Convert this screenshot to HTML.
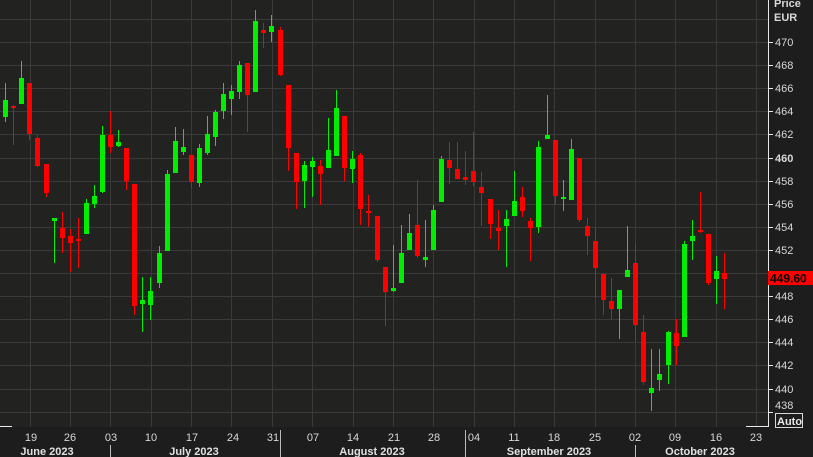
<!DOCTYPE html>
<html><head><meta charset="utf-8"><style>
html,body{margin:0;padding:0;background:#1c1c1c;width:813px;height:457px;overflow:hidden}
svg{display:block}
text{font-family:"Liberation Sans",sans-serif}
</style></head><body>
<svg width="813" height="457" viewBox="0 0 813 457" xmlns="http://www.w3.org/2000/svg">
<rect x="0" y="0" width="813" height="457" fill="#1d1d1d"/>
<rect x="0" y="0" width="768" height="427" fill="#222321"/>
<g stroke="#3a3a3a" stroke-width="1">
<line x1="0" x2="768" y1="19.5" y2="19.5"/><line x1="0" x2="768" y1="42.5" y2="42.5"/><line x1="0" x2="768" y1="65.5" y2="65.5"/><line x1="0" x2="768" y1="88.5" y2="88.5"/><line x1="0" x2="768" y1="111.5" y2="111.5"/><line x1="0" x2="768" y1="134.5" y2="134.5"/><line x1="0" x2="768" y1="158.5" y2="158.5"/><line x1="0" x2="768" y1="181.5" y2="181.5"/><line x1="0" x2="768" y1="204.5" y2="204.5"/><line x1="0" x2="768" y1="227.5" y2="227.5"/><line x1="0" x2="768" y1="250.5" y2="250.5"/><line x1="0" x2="768" y1="273.5" y2="273.5"/><line x1="0" x2="768" y1="296.5" y2="296.5"/><line x1="0" x2="768" y1="319.5" y2="319.5"/><line x1="0" x2="768" y1="342.5" y2="342.5"/><line x1="0" x2="768" y1="365.5" y2="365.5"/><line x1="0" x2="768" y1="389.5" y2="389.5"/><line x1="0" x2="768" y1="412.5" y2="412.5"/>
<line y1="0" y2="427" x1="30.5" x2="30.5"/><line y1="0" y2="427" x1="70.5" x2="70.5"/><line y1="0" y2="427" x1="110.5" x2="110.5"/><line y1="0" y2="427" x1="151.5" x2="151.5"/><line y1="0" y2="427" x1="191.5" x2="191.5"/><line y1="0" y2="427" x1="231.5" x2="231.5"/><line y1="0" y2="427" x1="272.5" x2="272.5"/><line y1="0" y2="427" x1="312.5" x2="312.5"/><line y1="0" y2="427" x1="353.5" x2="353.5"/><line y1="0" y2="427" x1="393.5" x2="393.5"/><line y1="0" y2="427" x1="433.5" x2="433.5"/><line y1="0" y2="427" x1="474.5" x2="474.5"/><line y1="0" y2="427" x1="514.5" x2="514.5"/><line y1="0" y2="427" x1="554.5" x2="554.5"/><line y1="0" y2="427" x1="595.5" x2="595.5"/><line y1="0" y2="427" x1="635.5" x2="635.5"/><line y1="0" y2="427" x1="675.5" x2="675.5"/><line y1="0" y2="427" x1="716.5" x2="716.5"/><line y1="0" y2="427" x1="756.5" x2="756.5"/>
</g>
<g fill="#00ee00">
<rect x="5" y="83" width="1" height="39"/><rect x="3" y="100" width="5" height="17"/>
<rect x="21" y="61" width="1" height="43"/><rect x="19" y="78" width="5" height="26"/>
<rect x="54" y="218" width="1" height="45"/><rect x="52" y="218" width="5" height="3"/>
<rect x="86" y="199" width="1" height="35"/><rect x="84" y="203" width="5" height="31"/>
<rect x="94" y="185" width="1" height="23"/><rect x="92" y="196" width="5" height="8"/>
<rect x="102" y="126" width="1" height="67"/><rect x="100" y="135" width="5" height="57"/>
<rect x="118" y="130" width="1" height="17"/><rect x="116" y="142" width="5" height="4"/>
<rect x="142" y="277" width="1" height="55"/><rect x="140" y="300" width="5" height="4"/>
<rect x="150" y="277" width="1" height="43"/><rect x="148" y="291" width="5" height="14"/>
<rect x="159" y="246" width="1" height="42"/><rect x="157" y="253" width="5" height="30"/>
<rect x="167" y="170" width="1" height="81"/><rect x="165" y="174" width="5" height="77"/>
<rect x="175" y="127" width="1" height="46"/><rect x="173" y="141" width="5" height="32"/>
<rect x="183" y="129" width="1" height="26"/><rect x="181" y="147" width="5" height="5"/>
<rect x="199" y="144" width="1" height="43"/><rect x="197" y="148" width="5" height="35"/>
<rect x="207" y="116" width="1" height="39"/><rect x="205" y="134" width="5" height="19"/>
<rect x="215" y="110" width="1" height="36"/><rect x="213" y="112" width="5" height="25"/>
<rect x="223" y="83" width="1" height="36"/><rect x="221" y="94" width="5" height="17"/>
<rect x="231" y="85" width="1" height="30"/><rect x="229" y="91" width="5" height="8"/>
<rect x="239" y="61" width="1" height="38"/><rect x="237" y="65" width="5" height="27"/>
<rect x="255" y="10" width="1" height="82"/><rect x="253" y="21" width="5" height="71"/>
<rect x="271" y="15" width="1" height="27"/><rect x="269" y="26" width="5" height="6"/>
<rect x="304" y="161" width="1" height="47"/><rect x="302" y="165" width="5" height="16"/>
<rect x="312" y="157" width="1" height="40"/><rect x="310" y="161" width="5" height="6"/>
<rect x="328" y="118" width="1" height="50"/><rect x="326" y="150" width="5" height="18"/>
<rect x="336" y="90" width="1" height="66"/><rect x="334" y="108" width="5" height="48"/>
<rect x="352" y="151" width="1" height="32"/><rect x="350" y="159" width="5" height="10"/>
<rect x="393" y="245" width="1" height="47"/><rect x="391" y="288" width="5" height="3"/>
<rect x="401" y="225" width="1" height="58"/><rect x="399" y="253" width="5" height="30"/>
<rect x="409" y="214" width="1" height="36"/><rect x="407" y="233" width="5" height="17"/>
<rect x="425" y="220" width="1" height="47"/><rect x="423" y="257" width="5" height="3"/>
<rect x="433" y="205" width="1" height="45"/><rect x="431" y="210" width="5" height="40"/>
<rect x="441" y="156" width="1" height="46"/><rect x="439" y="159" width="5" height="43"/>
<rect x="506" y="210" width="1" height="57"/><rect x="504" y="219" width="5" height="7"/>
<rect x="514" y="171" width="1" height="45"/><rect x="512" y="201" width="5" height="15"/>
<rect x="538" y="141" width="1" height="92"/><rect x="536" y="147" width="5" height="80"/>
<rect x="547" y="95" width="1" height="44"/><rect x="545" y="135" width="5" height="4"/>
<rect x="563" y="180" width="1" height="31"/><rect x="561" y="197" width="5" height="2"/>
<rect x="571" y="139" width="1" height="61"/><rect x="569" y="149" width="5" height="51"/>
<rect x="619" y="290" width="1" height="49"/><rect x="617" y="290" width="5" height="19"/>
<rect x="627" y="226" width="1" height="51"/><rect x="625" y="270" width="5" height="7"/>
<rect x="651" y="349" width="1" height="62"/><rect x="649" y="388" width="5" height="5"/>
<rect x="659" y="349" width="1" height="42"/><rect x="657" y="374" width="5" height="6"/>
<rect x="668" y="331" width="1" height="53"/><rect x="666" y="332" width="5" height="33"/>
<rect x="684" y="241" width="1" height="96"/><rect x="682" y="244" width="5" height="93"/>
<rect x="692" y="220" width="1" height="40"/><rect x="690" y="236" width="5" height="5"/>
<rect x="716" y="256" width="1" height="48"/><rect x="714" y="271" width="5" height="8"/>
</g>
<g fill="#ff0000">
<rect x="13" y="105" width="1" height="40"/><rect x="11" y="106" width="5" height="2"/>
<rect x="29" y="83" width="1" height="57"/><rect x="27" y="83" width="5" height="51"/>
<rect x="37" y="135" width="1" height="32"/><rect x="35" y="138" width="5" height="28"/>
<rect x="46" y="164" width="1" height="33"/><rect x="44" y="164" width="5" height="29"/>
<rect x="62" y="212" width="1" height="41"/><rect x="60" y="228" width="5" height="10"/>
<rect x="70" y="229" width="1" height="43"/><rect x="68" y="236" width="5" height="7"/>
<rect x="78" y="218" width="1" height="50"/><rect x="76" y="239" width="5" height="2"/>
<rect x="110" y="111" width="1" height="42"/><rect x="108" y="135" width="5" height="12"/>
<rect x="126" y="148" width="1" height="42"/><rect x="124" y="148" width="5" height="33"/>
<rect x="134" y="184" width="1" height="131"/><rect x="132" y="184" width="5" height="122"/>
<rect x="191" y="155" width="1" height="33"/><rect x="189" y="155" width="5" height="27"/>
<rect x="247" y="63" width="1" height="69"/><rect x="245" y="63" width="5" height="32"/>
<rect x="263" y="23" width="1" height="25"/><rect x="261" y="30" width="5" height="3"/>
<rect x="280" y="27" width="1" height="49"/><rect x="278" y="30" width="5" height="45"/>
<rect x="288" y="85" width="1" height="86"/><rect x="286" y="85" width="5" height="63"/>
<rect x="296" y="153" width="1" height="56"/><rect x="294" y="153" width="5" height="29"/>
<rect x="320" y="160" width="1" height="45"/><rect x="318" y="166" width="5" height="8"/>
<rect x="344" y="116" width="1" height="65"/><rect x="342" y="116" width="5" height="52"/>
<rect x="360" y="153" width="1" height="72"/><rect x="358" y="155" width="5" height="54"/>
<rect x="368" y="195" width="1" height="32"/><rect x="366" y="211" width="5" height="2"/>
<rect x="377" y="216" width="1" height="46"/><rect x="375" y="216" width="5" height="44"/>
<rect x="385" y="267" width="1" height="59"/><rect x="383" y="267" width="5" height="25"/>
<rect x="417" y="180" width="1" height="78"/><rect x="415" y="225" width="5" height="31"/>
<rect x="449" y="142" width="1" height="42"/><rect x="447" y="160" width="5" height="8"/>
<rect x="457" y="142" width="1" height="37"/><rect x="455" y="169" width="5" height="10"/>
<rect x="465" y="151" width="1" height="34"/><rect x="463" y="177" width="5" height="3"/>
<rect x="473" y="132" width="1" height="54"/><rect x="471" y="171" width="5" height="11"/>
<rect x="481" y="172" width="1" height="54"/><rect x="479" y="187" width="5" height="6"/>
<rect x="490" y="199" width="1" height="40"/><rect x="488" y="199" width="5" height="25"/>
<rect x="498" y="210" width="1" height="40"/><rect x="496" y="228" width="5" height="3"/>
<rect x="522" y="187" width="1" height="30"/><rect x="520" y="197" width="5" height="14"/>
<rect x="530" y="218" width="1" height="43"/><rect x="528" y="221" width="5" height="7"/>
<rect x="555" y="140" width="1" height="65"/><rect x="553" y="140" width="5" height="56"/>
<rect x="579" y="158" width="1" height="64"/><rect x="577" y="158" width="5" height="62"/>
<rect x="587" y="218" width="1" height="37"/><rect x="585" y="226" width="5" height="10"/>
<rect x="595" y="228" width="1" height="70"/><rect x="593" y="241" width="5" height="27"/>
<rect x="603" y="274" width="1" height="41"/><rect x="601" y="274" width="5" height="26"/>
<rect x="611" y="278" width="1" height="41"/><rect x="609" y="301" width="5" height="8"/>
<rect x="635" y="243" width="1" height="99"/><rect x="633" y="263" width="5" height="62"/>
<rect x="643" y="315" width="1" height="70"/><rect x="641" y="332" width="5" height="50"/>
<rect x="676" y="319" width="1" height="46"/><rect x="674" y="333" width="5" height="13"/>
<rect x="700" y="192" width="1" height="41"/><rect x="698" y="230" width="5" height="2"/>
<rect x="708" y="234" width="1" height="51"/><rect x="706" y="234" width="5" height="49"/>
<rect x="724" y="253" width="1" height="56"/><rect x="722" y="273" width="5" height="6"/>
</g>
<!-- price axis -->
<rect x="768" y="0" width="1" height="427" fill="#e8e8e8"/>
<g fill="#e8e8e8">
<rect x="769" y="42" width="4" height="1"/><rect x="769" y="65" width="4" height="1"/><rect x="769" y="88" width="4" height="1"/><rect x="769" y="111" width="4" height="1"/><rect x="769" y="134" width="4" height="1"/><rect x="769" y="158" width="4" height="1"/><rect x="769" y="181" width="4" height="1"/><rect x="769" y="204" width="4" height="1"/><rect x="769" y="227" width="4" height="1"/><rect x="769" y="250" width="4" height="1"/><rect x="769" y="273" width="4" height="1"/><rect x="769" y="296" width="4" height="1"/><rect x="769" y="319" width="4" height="1"/><rect x="769" y="342" width="4" height="1"/><rect x="769" y="365" width="4" height="1"/><rect x="769" y="389" width="4" height="1"/><rect x="769" y="412" width="4" height="1"/>
<rect x="0" y="426" width="12" height="1"/><rect x="746" y="426" width="22" height="1"/>
</g>
<g fill="#d8d8d8" font-size="11">
<text x="774" y="7" font-weight="bold">Price</text>
<text x="774" y="21" font-weight="bold">EUR</text>
<text x="775" y="46">470</text><text x="775" y="69">468</text><text x="775" y="92">466</text><text x="775" y="115">464</text><text x="775" y="138">462</text><text x="775" y="162" font-weight="bold">460</text><text x="775" y="185">458</text><text x="775" y="208">456</text><text x="775" y="231">454</text><text x="775" y="254">452</text><text x="775" y="300">448</text><text x="775" y="323">446</text><text x="775" y="346">444</text><text x="775" y="369">442</text><text x="775" y="393">440</text><text x="775" y="409">438</text>
</g>
<rect x="768" y="271" width="45" height="14" fill="#ff0000"/>
<text x="770" y="282.5" font-size="12" font-weight="bold" fill="#000">449.60</text>
<rect x="775.5" y="413.5" width="27" height="14" fill="none" stroke="#d8d8d8"/>
<text x="777" y="425" font-size="11" font-weight="bold" fill="#e8e8e8">Auto</text>
<!-- x axis -->
<g fill="#d8d8d8" font-size="11" text-anchor="middle">
<text x="31" y="441">19</text><text x="70" y="441">26</text><text x="111" y="441">03</text><text x="151" y="441">10</text><text x="192" y="441">17</text><text x="233" y="441">24</text><text x="273" y="441">31</text><text x="313" y="441">07</text><text x="353" y="441">14</text><text x="394" y="441">21</text><text x="434" y="441">28</text><text x="474" y="441">04</text><text x="514" y="441">11</text><text x="554" y="441">18</text><text x="595" y="441">25</text><text x="635" y="441">02</text><text x="675" y="441">09</text><text x="716" y="441">16</text><text x="756" y="441">23</text>
</g>
<g fill="#e0e0e0" font-size="11" font-weight="bold" text-anchor="middle">
<text x="47" y="455">June 2023</text><text x="194" y="455">July 2023</text><text x="372" y="455">August 2023</text><text x="549" y="455">September 2023</text><text x="700" y="455">October 2023</text>
</g>
<g fill="#bbbbbb">
<rect x="110" y="445" width="1" height="12"/><rect x="280" y="430" width="1" height="27"/><rect x="465" y="430" width="1" height="27"/><rect x="635" y="445" width="1" height="12"/>
</g>
</svg>
</body></html>
